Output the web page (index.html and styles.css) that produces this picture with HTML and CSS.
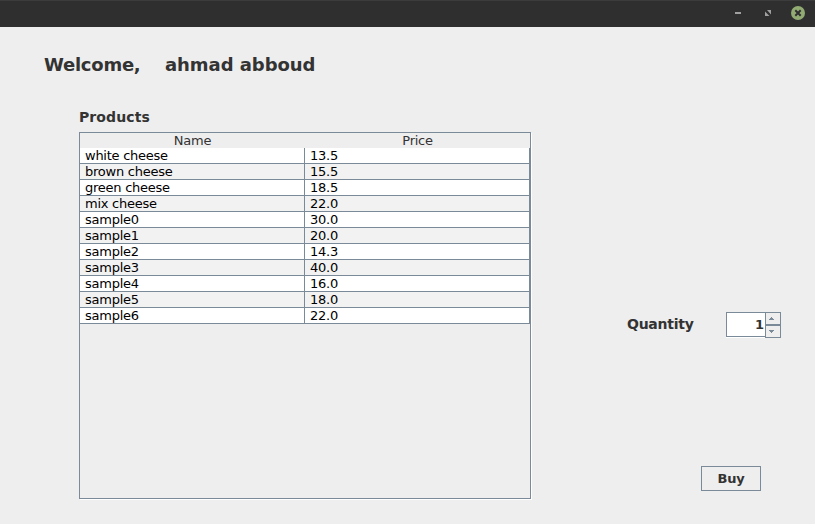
FILE: index.html
```
<!DOCTYPE html>
<html lang="en">
<head>
<meta charset="utf-8">
<title>Products</title>
<link rel="stylesheet" href="styles.css">
</head>
<body>
<header class="titlebar">
  <svg class="controls" width="78" height="16" viewBox="0 0 78 16">
    <path d="M5 8h6" stroke="#a0a0a0" stroke-width="2"/>
    <path d="M37 5h4v4.5zM35 6.5v4.500h4.500z" fill="#a0a0a0"/>
    <circle cx="68" cy="8" r="7" fill="#91ab73"/>
    <path d="M65.300 5.300l5.400 5.400M70.700 5.300l-5.400 5.400" stroke="#2f2f2f" stroke-width="2"/>
  </svg>
</header>
<main class="content">
  <section class="left">
    <h1 class="welcome"><span class="greeting">Welcome,</span><span class="user">ahmad abboud</span></h1>
    <h2 class="label products-label">Products</h2>
    <div class="pane">
      <table class="products">
        <thead><tr><th>Name</th><th>Price</th></tr></thead>
        <tbody>
          <tr><td>white cheese</td><td>13.5</td></tr>
          <tr><td>brown cheese</td><td>15.5</td></tr>
          <tr><td>green cheese</td><td>18.5</td></tr>
          <tr><td>mix cheese</td><td>22.0</td></tr>
          <tr><td>sample0</td><td>30.0</td></tr>
          <tr><td>sample1</td><td>20.0</td></tr>
          <tr><td>sample2</td><td>14.3</td></tr>
          <tr><td>sample3</td><td>40.0</td></tr>
          <tr><td>sample4</td><td>16.0</td></tr>
          <tr><td>sample5</td><td>18.0</td></tr>
          <tr><td>sample6</td><td>22.0</td></tr>
        </tbody>
      </table>
    </div>
  </section>
  <section class="right">
    <div class="quantity">
      <span class="label">Quantity</span>
      <div class="spinner">
        <div class="value">1</div>
        <div class="arrows">
          <svg class="arrow" width="14" height="11" viewBox="0 0 14 11" shape-rendering="crispEdges"><path d="M3 7V6h1V5h1V4h1v1h1v1h1v1z" fill="#7a8a99"/></svg>
          <svg class="arrow" width="14" height="11" viewBox="0 0 14 11" shape-rendering="crispEdges"><path d="M3 4v1h1v1h1v1h1V6h1V5h1V4z" fill="#7a8a99"/></svg>
        </div>
      </div>
    </div>
    <button class="buy">Buy</button>
  </section>
</main>
</body>
</html>
```
FILE: styles.css
```
* { box-sizing: border-box; }
body {
  margin: 0;
  height: 524px;
  overflow: hidden;
  background: #eee;
  color: #333;
  font-family: "DejaVu Sans", sans-serif;
  font-size: 13px;
}
.titlebar {
  height: 27px;
  padding: 4px 7px 0 0;
  border-top: 1px solid #3c3c3c;
  display: flex;
  justify-content: flex-end;
  background: #2f2f2f;
}
.controls { display: block; }
.content {
  display: flex;
  height: 497px;
}
.left { width: 531px; }
.welcome {
  display: flex;
  margin: 26px 0 0 44px;
  font-size: 18px;
  line-height: 24px;
}
.greeting {
  width: 121px;
  letter-spacing: -0.25px;
}
.user { letter-spacing: -0.05px; }
.label {
  font-size: 14px;
  font-weight: bold;
  line-height: 20px;
}
.products-label {
  margin: 30px 0 5px 79px;
  letter-spacing: 0.1px;
}
.pane {
  width: 452px;
  height: 367px;
  margin-left: 79px;
  border: 1px solid #7a8a99;
  box-shadow: 1px 1px 0 #fff;
}
.products {
  width: 450px;
  table-layout: fixed;
  border-spacing: 0;
  line-height: 15px;
}
.products th {
  padding: 0;
  height: 15px;
  font-weight: normal;
  letter-spacing: -0.25px;
}
.products td {
  height: 16px;
  padding: 0 5px;
  border: solid #7a8a99;
  border-width: 0 1px 1px 0;
  background: #fff;
  color: #000;
  letter-spacing: -0.25px;
}
.products tr:nth-child(even) td { background: #f2f2f2; }
.right {
  flex: 1;
  padding: 285px 34px 0 96px;
  display: flex;
  flex-direction: column;
}
.quantity {
  display: flex;
  justify-content: space-between;
  height: 26px;
}
.quantity .label {
  line-height: 25px;
  letter-spacing: -0.25px;
}
.spinner {
  display: flex;
  width: 55px;
}
.value {
  width: 39px;
  height: 25px;
  padding-right: 1px;
  border: 1px solid #7a8a99;
  border-right: 0;
  background: #fff;
  box-shadow: 0 1px 0 #fff;
  font-size: 13px;
  font-weight: bold;
  line-height: 23px;
  text-align: right;
}
.arrows { width: 16px; }
.arrow {
  display: block;
  width: 16px;
  height: 13px;
  border: 1px solid #7a8a99;
}
.buy {
  align-self: flex-end;
  width: 60px;
  height: 25px;
  margin: 128px 20px 0 0;
  padding: 0;
  border: 1px solid #7a8a99;
  background: #eee;
  color: #333;
  font: bold 13px "DejaVu Sans", sans-serif;
  letter-spacing: -0.25px;
}
```
